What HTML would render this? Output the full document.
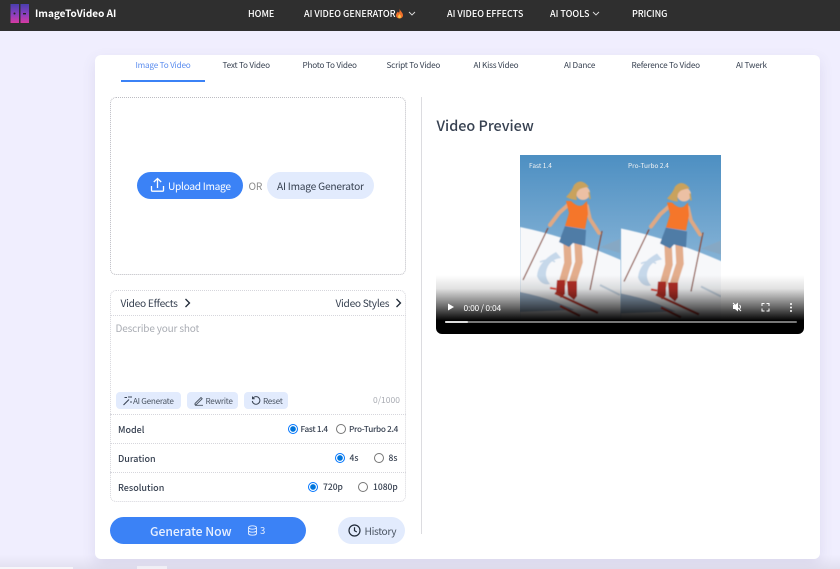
<!DOCTYPE html>
<html><head><meta charset="utf-8"><style>
*{box-sizing:border-box;margin:0;padding:0}
html,body{width:840px;height:569px;overflow:hidden}
body{background:#f0eefe;font-family:"Noto Sans CJK SC","Liberation Sans",sans-serif;position:relative;color:#1f2937}
.t{position:absolute;white-space:nowrap;line-height:1}
.a{position:absolute}
.nav{position:absolute;left:0;top:0;width:840px;height:31px;background:#2f2f2f}
.n{color:#fff;font-size:9px;font-weight:500;top:9px}
.tab{font-size:8.200px;letter-spacing:-.22px;top:61px;color:#374151;font-weight:400}
.pill{position:absolute;border-radius:16px;display:block}
.mini{position:absolute;top:392px;height:17px;background:#e2ebfd;border-radius:4px}
.lbl{font-size:9px;font-weight:500;color:#374151}
.rd{position:absolute;width:10px;height:10px;border-radius:50%;border:1px solid #767676;background:#fff}
.rd.on{border:1.500px solid #0075ff;background:radial-gradient(circle,#0075db 0 2.600px,#fff 3px)}
.rt{font-size:8.500px;color:#374151;font-weight:500}
.rs{font-size:8.200px;letter-spacing:-.3px}
.m{font-size:8.200px;letter-spacing:-.3px;color:#4b5563;top:396.500px}
.dash{position:absolute;border-top:1px dotted #d6d6dc;height:0}
</style></head><body>
<div class="a" style="left:0;top:555px;width:840px;height:14px;background:linear-gradient(#f0eefe,#e2e0ef)"></div>
<div class="a" style="left:0;top:567px;width:73px;height:2px;background:#f6f6fa"></div>
<div class="a" style="left:137px;top:566px;width:30px;height:3px;background:#f6f6fa"></div>

<div class="nav"></div>
<svg class="a" style="left:10px;top:4px" width="20" height="20" viewBox="0 0 20 20">
<defs><linearGradient id="lg" x1="0" y1="0" x2="0" y2="1"><stop offset="0" stop-color="#4a3fb0"/><stop offset=".55" stop-color="#8b3fc0"/><stop offset="1" stop-color="#d63aa0"/></linearGradient></defs>
<rect x="0.500" y="0" width="8.500" height="19" fill="url(#lg)"/><rect x="10.500" y="0" width="8.500" height="19" fill="url(#lg)"/>
<circle cx="4.500" cy="9.500" r="1" fill="#222"/><rect x="13" y="9" width="3" height="1.400" fill="#222"/></svg>
<div class="t" style="left:35px;top:8px;font-size:10px;font-weight:700;color:#fff">ImageToVideo AI</div>
<div class="t n" style="left:248px">HOME</div>
<div class="t n" style="left:304px">AI VIDEO GENERATOR</div>
<svg class="a" style="left:395px;top:8px" width="9" height="11" viewBox="0 0 9 11"><path d="M4.500 0.500C5 3 8 4.500 8 7.300 8 9.400 6.400 10.500 4.500 10.500S1 9.400 1 7.300C1 5.600 2.200 5 2.600 3.600 3.400 4 3.800 4.500 3.900 5 4.600 3.800 4.800 2 4.500 .5Z" fill="#f0702a"/><path d="M4.500 6C5 7 6 7.500 6 8.600 6 9.600 5.300 10.300 4.500 10.300S3 9.600 3 8.600C3 7.600 4 7 4.500 6Z" fill="#fbc24a"/></svg>
<svg class="a" style="left:408px;top:11px" width="8" height="5" viewBox="0 0 8 5"><path d="M1 1l3 3 3-3" fill="none" stroke="#ddd" stroke-width=".9"/></svg>
<div class="t n" style="left:447px">AI VIDEO EFFECTS</div>
<div class="t n" style="left:550px">AI TOOLS</div>
<svg class="a" style="left:592px;top:11px" width="8" height="5" viewBox="0 0 8 5"><path d="M1 1l3 3 3-3" fill="none" stroke="#ddd" stroke-width=".9"/></svg>
<div class="t n" style="left:632px;letter-spacing:-.1px">PRICING</div>

<div class="a" style="left:95px;top:55px;width:725px;height:504px;background:#fff;border-radius:6px;box-shadow:0 5px 14px rgba(90,80,140,.12)"></div>

<div class="t tab" style="left:135.500px;color:#5b8def">Image To Video</div>
<div class="t tab" style="left:222.500px">Text To Video</div>
<div class="t tab" style="left:302.500px">Photo To Video</div>
<div class="t tab" style="left:386.500px">Script To Video</div>
<div class="t tab" style="left:473.500px">AI Kiss Video</div>
<div class="t tab" style="left:564px">AI Dance</div>
<div class="t tab" style="left:631.500px">Reference To Video</div>
<div class="t tab" style="left:736px">AI Twerk</div>
<div class="a" style="left:121px;top:80px;width:84px;height:2px;background:#3b82f6"></div>

<div class="a" style="left:110px;top:97px;width:296px;height:178px;border:1px dotted #bcbcc2;border-radius:6px"></div>
<div class="pill" style="left:137px;top:172px;width:106px;height:27px;background:#3b82f6"></div>
<svg class="a" style="left:150px;top:177px" width="15" height="16" viewBox="0 0 15 16" fill="none" stroke="#fff" stroke-width="1.300"><path d="M7.500 11V1.500M3.800 5L7.500 1.500 11.200 5M1.500 9v4.200a1 1 0 0 0 1 1h10a1 1 0 0 0 1-1V9"/></svg>
<div class="t" style="left:168px;top:180.500px;font-size:10.200px;letter-spacing:-.3px;color:#fff">Upload Image</div>
<div class="t" style="left:248.500px;top:180.500px;font-size:10.200px;letter-spacing:-.2px;color:#8b8b8b">OR</div>
<div class="pill" style="left:267px;top:172px;width:107px;height:27px;background:#e2ebfd"></div>
<div class="t" style="left:277px;top:180.500px;font-size:10.200px;letter-spacing:-.22px;color:#374151">AI Image Generator</div>

<div class="a" style="left:110px;top:290px;width:296px;height:212px;border:1px dotted #d6d6dc;border-radius:6px"></div>
<div class="t" style="left:120.500px;top:297.500px;font-size:10.200px;letter-spacing:-.28px;color:#374151">Video Effects</div>
<svg class="a" style="left:184px;top:298px" width="7" height="10" viewBox="0 0 7 10"><path d="M1.500 1l4 4-4 4" fill="none" stroke="#1f2937" stroke-width="1.300"/></svg>
<div class="t" style="left:335.500px;top:297.500px;font-size:10.200px;letter-spacing:-.3px;color:#374151">Video Styles</div>
<svg class="a" style="left:395px;top:298px" width="7" height="10" viewBox="0 0 7 10"><path d="M1.500 1l4 4-4 4" fill="none" stroke="#1f2937" stroke-width="1.300"/></svg>
<div class="dash" style="left:110px;top:315px;width:296px"></div>
<div class="t" style="left:115.500px;top:323px;font-size:10px;letter-spacing:-.17px;color:#a9acb3">Describe your shot</div>

<div class="mini" style="left:116px;width:65px"></div>
<svg class="a" style="left:122px;top:395px" width="11" height="11" viewBox="0 0 11 11" fill="none" stroke="#374151" stroke-width="1.100"><path d="M1.500 10L7 4.500"/><path d="M7 1v2M8 2h2M2.500 2.500h2.500M9 6v2" stroke-width=".9"/></svg>
<div class="t m" style="left:133px">AI Generate</div>
<div class="mini" style="left:187px;width:51px"></div>
<svg class="a" style="left:194px;top:395px" width="10" height="11" viewBox="0 0 10 11" fill="none" stroke="#4b5563" stroke-width=".9"><path d="M1 8.500L7 2.500l1.200 1.200-6 6H1zM1 10.300h8"/></svg>
<div class="t m" style="left:205.500px">Rewrite</div>
<div class="mini" style="left:244px;width:44px"></div>
<svg class="a" style="left:251px;top:395px" width="10" height="11" viewBox="0 0 10 11" fill="none" stroke="#374151" stroke-width="1"><path d="M2 3.200A3.800 3.800 0 1 1 1.300 6M1.500 1.500v2.200h2.200"/></svg>
<div class="t m" style="left:263px">Reset</div>
<div class="t" style="left:373px;top:396px;font-size:8.500px;color:#a9acb3">0/1000</div>

<div class="dash" style="left:110px;top:414px;width:296px"></div>
<div class="t lbl" style="left:118px;top:424.500px">Model</div>
<div class="rd on" style="left:288px;top:424px"></div><div class="t rt rs" style="left:300.500px;top:424.500px">Fast 1.4</div>
<div class="rd" style="left:336px;top:424px"></div><div class="t rt rs" style="left:349px;top:424.500px">Pro-Turbo 2.4</div>
<div class="dash" style="left:110px;top:443px;width:296px"></div>
<div class="t lbl" style="left:118px;top:453.500px">Duration</div>
<div class="rd on" style="left:335px;top:453px"></div><div class="t rt" style="left:349.500px;top:453.500px">4s</div>
<div class="rd" style="left:374px;top:453px"></div><div class="t rt" style="left:388.500px;top:453.500px">8s</div>
<div class="dash" style="left:110px;top:472px;width:296px"></div>
<div class="t lbl" style="left:118px;top:482.500px">Resolution</div>
<div class="rd on" style="left:308px;top:482px"></div><div class="t rt" style="left:323px;top:482.500px">720p</div>
<div class="rd" style="left:358px;top:482px"></div><div class="t rt" style="left:373px;top:482.500px">1080p</div>

<div class="pill" style="left:110px;top:517px;width:196px;height:27px;background:#3b82f6;border-radius:14px"></div>
<div class="t" style="left:150px;top:524.500px;font-size:12.200px;letter-spacing:-.05px;font-weight:500;color:#e8f0ff">Generate Now</div>
<svg class="a" style="left:247px;top:525px" width="11" height="11" viewBox="0 0 11 11" fill="none" stroke="#e8f0ff" stroke-width=".9"><ellipse cx="5.500" cy="2.500" rx="4" ry="1.700"/><path d="M1.500 2.500v6c0 1 1.800 1.700 4 1.700s4-.7 4-1.700v-6M1.500 5.500c0 1 1.800 1.700 4 1.700s4-.7 4-1.700"/></svg>
<div class="t" style="left:260px;top:526px;font-size:9.500px;color:#e8f0ff">3</div>
<div class="pill" style="left:338px;top:517px;width:67px;height:27px;background:#e2ebfd;border-radius:14px"></div>
<svg class="a" style="left:348px;top:524px" width="13" height="13" viewBox="0 0 13 13" fill="none" stroke="#1f2937" stroke-width="1.200"><circle cx="6.500" cy="6.500" r="5.500"/><path d="M6.500 3.300v3.400l2.300 1.300"/></svg>
<div class="t" style="left:364.500px;top:525.500px;font-size:10.200px;letter-spacing:-.35px;color:#4b5563">History</div>

<div class="a" style="left:421px;top:97px;width:1px;height:437px;background:#dcdce0"></div>
<div class="t" style="left:436.500px;top:119px;font-size:14.400px;font-weight:500;color:#374151">Video Preview</div>

<div class="a" style="left:436px;top:150px;width:368px;height:184px;background:#fff;border-radius:0 0 6px 6px;overflow:hidden">
<svg width="368" height="184" viewBox="436 150 368 184" style="position:absolute;left:0;top:0">
<defs>
<linearGradient id="sky" x1="0" y1="0" x2="0" y2="1"><stop offset="0" stop-color="#4d8fc2"/><stop offset=".65" stop-color="#86b3d6"/><stop offset="1" stop-color="#b3cfe4"/></linearGradient>
<filter id="bl" x="-5%" y="-5%" width="110%" height="110%"><feGaussianBlur stdDeviation=".4"/></filter>
<g id="skier">
<path d="M520 227Q565 236 621 260V322H520Z" fill="#f7f8fa"/>
<path d="M600 247L620 239V253Z" fill="#86a8c4"/>
<path d="M556 252Q538 262 537 276 541 286 550 284 543 276 548 266 552 259 561 258Z" fill="#c6d8ea"/>
<path d="M540 262Q550 258 555 262" stroke="#c6d8ea" stroke-width="1.500" fill="none"/>
<path d="M520 292Q540 296 556 302L575 310 520 312Z" fill="#9db4cc"/>
<path d="M600 285Q610 290 620 295" stroke="#c6d4e2" stroke-width="2" fill="none"/>
<path d="M548 228L523 280M602 231L590 290" stroke="#8a4a3a" stroke-width="1.200"/>
<path d="M568 205L559 213 550 225" stroke="#dfa884" stroke-width="4" fill="none" stroke-linecap="round"/>
<path d="M587 206L590 219 599 233" stroke="#dfa884" stroke-width="3.800" fill="none" stroke-linecap="round"/>
<path d="M567 242L568 263 562 284M578 242L579 262 572 284" stroke="#e3ad8c" stroke-width="7.500" fill="none" stroke-linecap="round"/>
<path d="M566 201L571 201Q578 208 583 205L587 201 588 214 585 229 565 226 569 213Z" fill="#f5762a"/>
<path d="M565 226L586 230 585 246 573 243 569 247 559 242Z" fill="#4f7ba6"/>
<circle cx="583" cy="193" r="7" fill="#ecc0a4"/>
<path d="M589 187Q581 177 574 185 572 191 566 197 572 200 577 200 575 192 580 189 585 187 589 187Z" fill="#c9a25d"/>
<path d="M589 192l1 7" stroke="#c9a25d" stroke-width="1.500"/>
<path d="M557 280H565V294L561 298 556 292ZM567 281H577V296L574 300 568 295Z" fill="#b32d25"/>
<path d="M555 293L598 313" stroke="#c43b2c" stroke-width="2.400"/>
<path d="M560 306L580 316" stroke="#c43b2c" stroke-width="2.400"/>
<path d="M550 288l6 1" stroke="#e8412d" stroke-width="2"/>
</g>
<linearGradient id="ov" x1="0" y1="0" x2="0" y2="1"><stop offset="0" stop-color="#000" stop-opacity="0"/><stop offset=".3" stop-color="#000" stop-opacity=".12"/><stop offset=".7" stop-color="#000" stop-opacity=".6"/><stop offset="1" stop-color="#000" stop-opacity="1"/></linearGradient>
<clipPath id="cL"><rect x="520" y="155" width="100.500" height="167"/></clipPath>
<clipPath id="cR"><rect x="620.500" y="155" width="100.500" height="167"/></clipPath>
</defs>
<rect x="520" y="155" width="201" height="166" fill="url(#sky)"/>
<g clip-path="url(#cL)"><use href="#skier" filter="url(#bl)"/></g>
<g clip-path="url(#cR)"><use href="#skier" transform="translate(101,1.500)" filter="url(#bl)"/></g>
<text x="529" y="168" font-size="6.500" fill="#f4f4f4" font-family="Noto Sans CJK SC,Liberation Sans,sans-serif">Fast 1.4</text>
<text x="628" y="168" font-size="6.500" fill="#f4f4f4" font-family="Noto Sans CJK SC,Liberation Sans,sans-serif">Pro-Turbo 2.4</text>
<rect x="436" y="275" width="368" height="46" fill="url(#ov)"/>
<rect x="436" y="320" width="368" height="14" fill="#000"/>
<rect x="445" y="321" width="352" height="2" rx="1" fill="#777"/>
<rect x="445" y="321" width="23" height="2" rx="1" fill="#ddd"/>
<path d="M448 303.500l6 3.500-6 3.500z" fill="#fff"/>
<text x="463.500" y="311" font-size="8.500" letter-spacing="-.25" fill="#fff" font-family="Noto Sans CJK SC,Liberation Sans,sans-serif">0:00 / 0:04</text>
<path d="M733 305h2l3-2.500v9l-3-2.500h-2z" fill="#fff"/><path d="M733 303l8 8" stroke="#fff" stroke-width="1"/><path d="M739.500 305q2 2 0 4" stroke="#fff" stroke-width="1" fill="none"/>
<path d="M762 306v-2.500h2.500M766.500 303.500h2.500v2.500M769 308.500v2.500h-2.500M764.500 311h-2.500v-2.500" stroke="#fff" stroke-width="1" fill="none"/>
<circle cx="791" cy="304" r="1" fill="#fff"/><circle cx="791" cy="307.500" r="1" fill="#fff"/><circle cx="791" cy="311" r="1" fill="#fff"/>
</svg>
</div>
</body></html>
